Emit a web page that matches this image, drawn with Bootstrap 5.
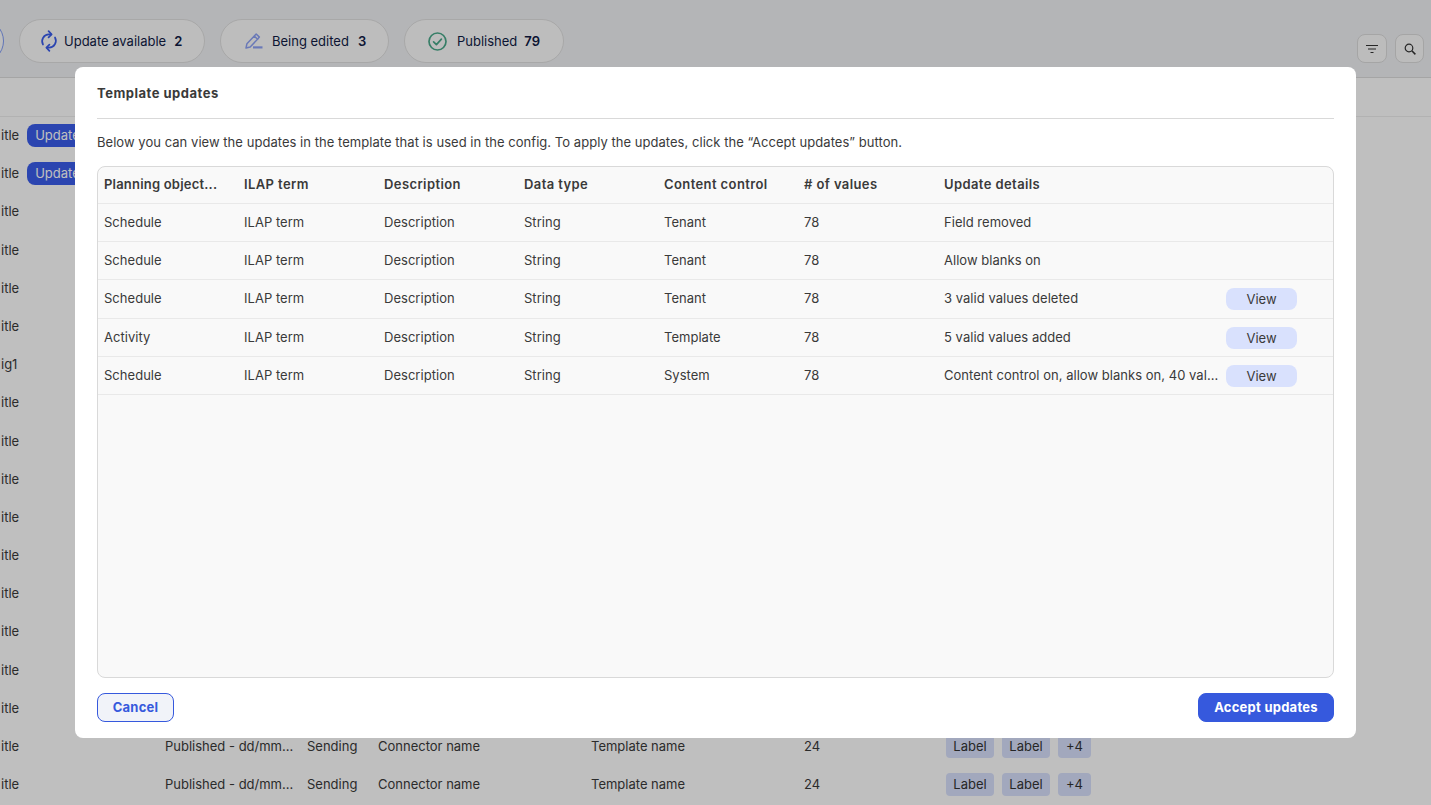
<!DOCTYPE html>
<html lang="en">
<head>
<meta charset="utf-8">
<title>Template updates</title>
<link href="https://cdn.jsdelivr.net/npm/bootstrap@5.3.0/dist/css/bootstrap.min.css" rel="stylesheet">
<style>
html,body{height:100%;overflow:hidden}
body{font-family:Inter,"Liberation Sans",sans-serif;font-size:13px;color:#3a3a3a;background:#fff}
.top-band{height:78px;background:#f1f2f5;border-bottom:1px solid #dcdcdc;padding:19px 7px 0 0}
.pill-tab{height:44px;border:1px solid #e0e0e0;border-radius:22px;background:#fdfdfd;color:#101b45;white-space:nowrap;gap:6px}
.pill-tab span{padding-top:1px}
.pill-first{width:100px;margin-left:-96px;border-color:#7f9bf5}
.pill-a{width:186px;padding-left:20px}
.pill-b{width:169px;padding-left:24px;gap:9px}
.pill-c{width:160px;padding-left:23px;gap:10px}
.pill-tab b{font-weight:600;padding-top:1px}
.pill-a b{margin-left:2px}
.pill-c b{margin-left:-3px}
.square-btn{width:30px;height:29px;border:1px solid #dcdcdc;border-radius:8px;background:#fbfbfb}
.square-narrow{width:29px}
.head-band{height:38.7px;border-bottom:1px solid #eeeeee}
.data-row{display:grid;grid-template-columns:164px 142px 71px 213px 213px 142px 1fr;height:38.2px;align-items:center;padding-left:1px}
.data-row>div{white-space:nowrap}
.first-cell{display:flex;align-items:center;gap:8px}
.upd-badge{background:#3a5ceb;color:#fff;border-radius:8px;height:23px;line-height:23px;padding:0 8px}
.tag-chip{background:#d9e1fd;border-radius:4px;height:23px;line-height:23px;padding:0 8px;min-width:32px;text-align:center;color:#333}
.chip-w{width:48px;padding:0}
.modal-backdrop{--bs-backdrop-opacity:.25}
.tpl-dialog{max-width:none;width:1281px;margin:67px 0 0 75px}
.tpl-content{height:671px;border:0;border-radius:8px;padding:0 22px 16px;background:#fff}
.tpl-title{height:52px;line-height:52px;border-bottom:1px solid #d9d9d9;font-weight:700;font-size:13px;letter-spacing:.5px;color:#3a3a3a;margin:0}
.tpl-intro{margin:14px 0 14px;height:19px;line-height:19px;letter-spacing:.04px;color:#3a3a3a}
.tpl-frame{flex:1 1 auto;min-height:0;border:1px solid #d9d9d9;border-radius:8px;background:#f9f9f9;overflow:hidden}
.tpl-table{table-layout:fixed;width:100%;margin:0;--bs-table-bg:transparent;--bs-table-color:#3a3a3a;--bs-table-border-color:#e9e9e9;font-size:13px}
.tpl-table th,.tpl-table td{padding:0 6px;vertical-align:middle;white-space:nowrap;overflow:hidden}
.tpl-table th{height:36px;font-weight:600;letter-spacing:.4px;color:#3a3a3a}
.tpl-table th:first-child{letter-spacing:.2px}
.tpl-table td{height:38px;padding-top:1px;letter-spacing:.03px}
.tpl-table .tall-row td{height:39px}
.view-btn{width:71px;height:22px;padding:0;border:0;border-radius:8px;background:#d9e1fd;color:#3a3a3a;font-size:13px;line-height:22px;--bs-btn-hover-bg:#d9e1fd;display:block}
.tpl-foot{margin-top:15px;height:29px}
.act-btn{height:29px;padding:0;font-size:13px;font-weight:700;letter-spacing:.25px;border-radius:8px;line-height:27px}
.act-cancel{width:77px;background:#f1f3f9;border:1px solid #3659dd;color:#3659dd}
.act-accept{width:136px;background:#3659dd;border:1px solid #3659dd;color:#fff}
</style>
</head>
<body>
<div class="top-band d-flex justify-content-between align-items-start">
  <div class="d-flex" style="gap:15px">
    <div class="pill-tab pill-first"></div>
    <div class="pill-tab pill-a d-flex align-items-center">
      <svg width="18" height="22" viewBox="0 0 18 22" fill="none" stroke="#3a5ceb" stroke-width="1.7" stroke-linecap="round" stroke-linejoin="round"><path d="M3 14.5A6.8 6.8 0 0 1 9 4.4h2"/><path d="M8.6 1.2l3 3.2-3 3"/><path d="M15 7.5A6.8 6.8 0 0 1 9 17.6H7"/><path d="M9.4 20.8l-3-3.2 3-3"/></svg>
      <span>Update available</span><b>2</b>
    </div>
    <div class="pill-tab pill-b d-flex align-items-center">
      <svg width="18" height="16" viewBox="0 0 18 16" fill="none" stroke="#8ea2f5" stroke-width="1.5" stroke-linejoin="round"><path d="M1 15l.9-4.2 7.4-7.7 3.2 3.2-7.3 7.7z"/><path d="M9.3 3.1l1.9-2.1 3.2 3.1-1.9 2.1"/><path d="M8 14.4h9.5" stroke-width="2.2"/></svg>
      <span>Being edited</span><b>3</b>
    </div>
    <div class="pill-tab pill-c d-flex align-items-center">
      <svg width="19" height="19" viewBox="0 0 19 19" fill="none" stroke="#4aa98a" stroke-width="1.7" stroke-linecap="round" stroke-linejoin="round"><circle cx="9.5" cy="9.5" r="8.5"/><path d="M5.6 9.8l2.8 2.8 5-5.4"/></svg>
      <span>Published</span><b>79</b>
    </div>
  </div>
  <div class="d-flex gap-2" style="margin-top:15px">
    <div class="square-btn d-flex align-items-center justify-content-center">
      <svg width="12" height="10" viewBox="0 0 12 10" stroke="#333" stroke-width="1" fill="none"><path d="M0 1.5h12M2 5h8M4.5 8.5h3"/></svg>
    </div>
    <div class="square-btn square-narrow d-flex align-items-center justify-content-center">
      <svg width="12" height="12" viewBox="0 0 12 12" stroke="#333" stroke-width="1.2" fill="none"><circle cx="5" cy="5" r="3.8"/><path d="M7.8 7.8L11.4 11.4" stroke-width="1.5"/></svg>
    </div>
  </div>
</div>
<div class="head-band"></div>
<div class="data-row"><div class="first-cell">itle<span class="upd-badge">Update</span></div></div>
<div class="data-row"><div class="first-cell">itle<span class="upd-badge">Update</span></div></div>
<div class="data-row"><div>itle</div></div>
<div class="data-row"><div>itle</div></div>
<div class="data-row"><div>itle</div></div>
<div class="data-row"><div>itle</div></div>
<div class="data-row"><div>ig1</div></div>
<div class="data-row"><div>itle</div></div>
<div class="data-row"><div>itle</div></div>
<div class="data-row"><div>itle</div></div>
<div class="data-row"><div>itle</div></div>
<div class="data-row"><div>itle</div></div>
<div class="data-row"><div>itle</div></div>
<div class="data-row"><div>itle</div></div>
<div class="data-row"><div>itle</div></div>
<div class="data-row"><div>itle</div></div>
<div class="data-row"><div>itle</div><div>Published - dd/mm...</div><div>Sending</div><div>Connector name</div><div>Template name</div><div>24</div><div class="d-flex gap-2"><span class="tag-chip chip-w">Label</span><span class="tag-chip chip-w">Label</span><span class="tag-chip">+4</span></div></div>
<div class="data-row"><div>itle</div><div>Published - dd/mm...</div><div>Sending</div><div>Connector name</div><div>Template name</div><div>24</div><div class="d-flex gap-2"><span class="tag-chip chip-w">Label</span><span class="tag-chip chip-w">Label</span><span class="tag-chip">+4</span></div></div>

<div class="modal-backdrop show"></div>
<div class="modal d-block" tabindex="-1" role="dialog" aria-modal="true">
  <div class="modal-dialog tpl-dialog">
    <div class="modal-content tpl-content">
      <h5 class="tpl-title">Template updates</h5>
      <p class="tpl-intro">Below you can view the updates in the template that is used in the config. To apply the updates, click the “Accept updates” button.</p>
      <div class="tpl-frame">
        <table class="table tpl-table">
          <colgroup><col style="width:140px"><col style="width:140px"><col style="width:140px"><col style="width:140px"><col style="width:140px"><col style="width:140px"><col style="width:282px"><col></colgroup>
          <thead><tr><th>Planning object...</th><th>ILAP term</th><th>Description</th><th>Data type</th><th>Content control</th><th># of values</th><th>Update details</th><th></th></tr></thead>
          <tbody>
            <tr><td>Schedule</td><td>ILAP term</td><td>Description</td><td>String</td><td>Tenant</td><td>78</td><td>Field removed</td><td></td></tr>
            <tr><td>Schedule</td><td>ILAP term</td><td>Description</td><td>String</td><td>Tenant</td><td>78</td><td>Allow blanks on</td><td></td></tr>
            <tr class="tall-row"><td>Schedule</td><td>ILAP term</td><td>Description</td><td>String</td><td>Tenant</td><td>78</td><td>3 valid values deleted</td><td><button type="button" class="btn view-btn">View</button></td></tr>
            <tr><td>Activity</td><td>ILAP term</td><td>Description</td><td>String</td><td>Template</td><td>78</td><td>5 valid values added</td><td><button type="button" class="btn view-btn">View</button></td></tr>
            <tr><td>Schedule</td><td>ILAP term</td><td>Description</td><td>String</td><td>System</td><td>78</td><td>Content control on, allow blanks on, 40 val...</td><td><button type="button" class="btn view-btn">View</button></td></tr>
          </tbody>
        </table>
      </div>
      <div class="tpl-foot d-flex justify-content-between">
        <button type="button" class="btn act-btn act-cancel">Cancel</button>
        <button type="button" class="btn act-btn act-accept">Accept updates</button>
      </div>
    </div>
  </div>
</div>
<script src="https://cdn.jsdelivr.net/npm/bootstrap@5.3.0/dist/js/bootstrap.bundle.min.js"></script>
</body>
</html>
